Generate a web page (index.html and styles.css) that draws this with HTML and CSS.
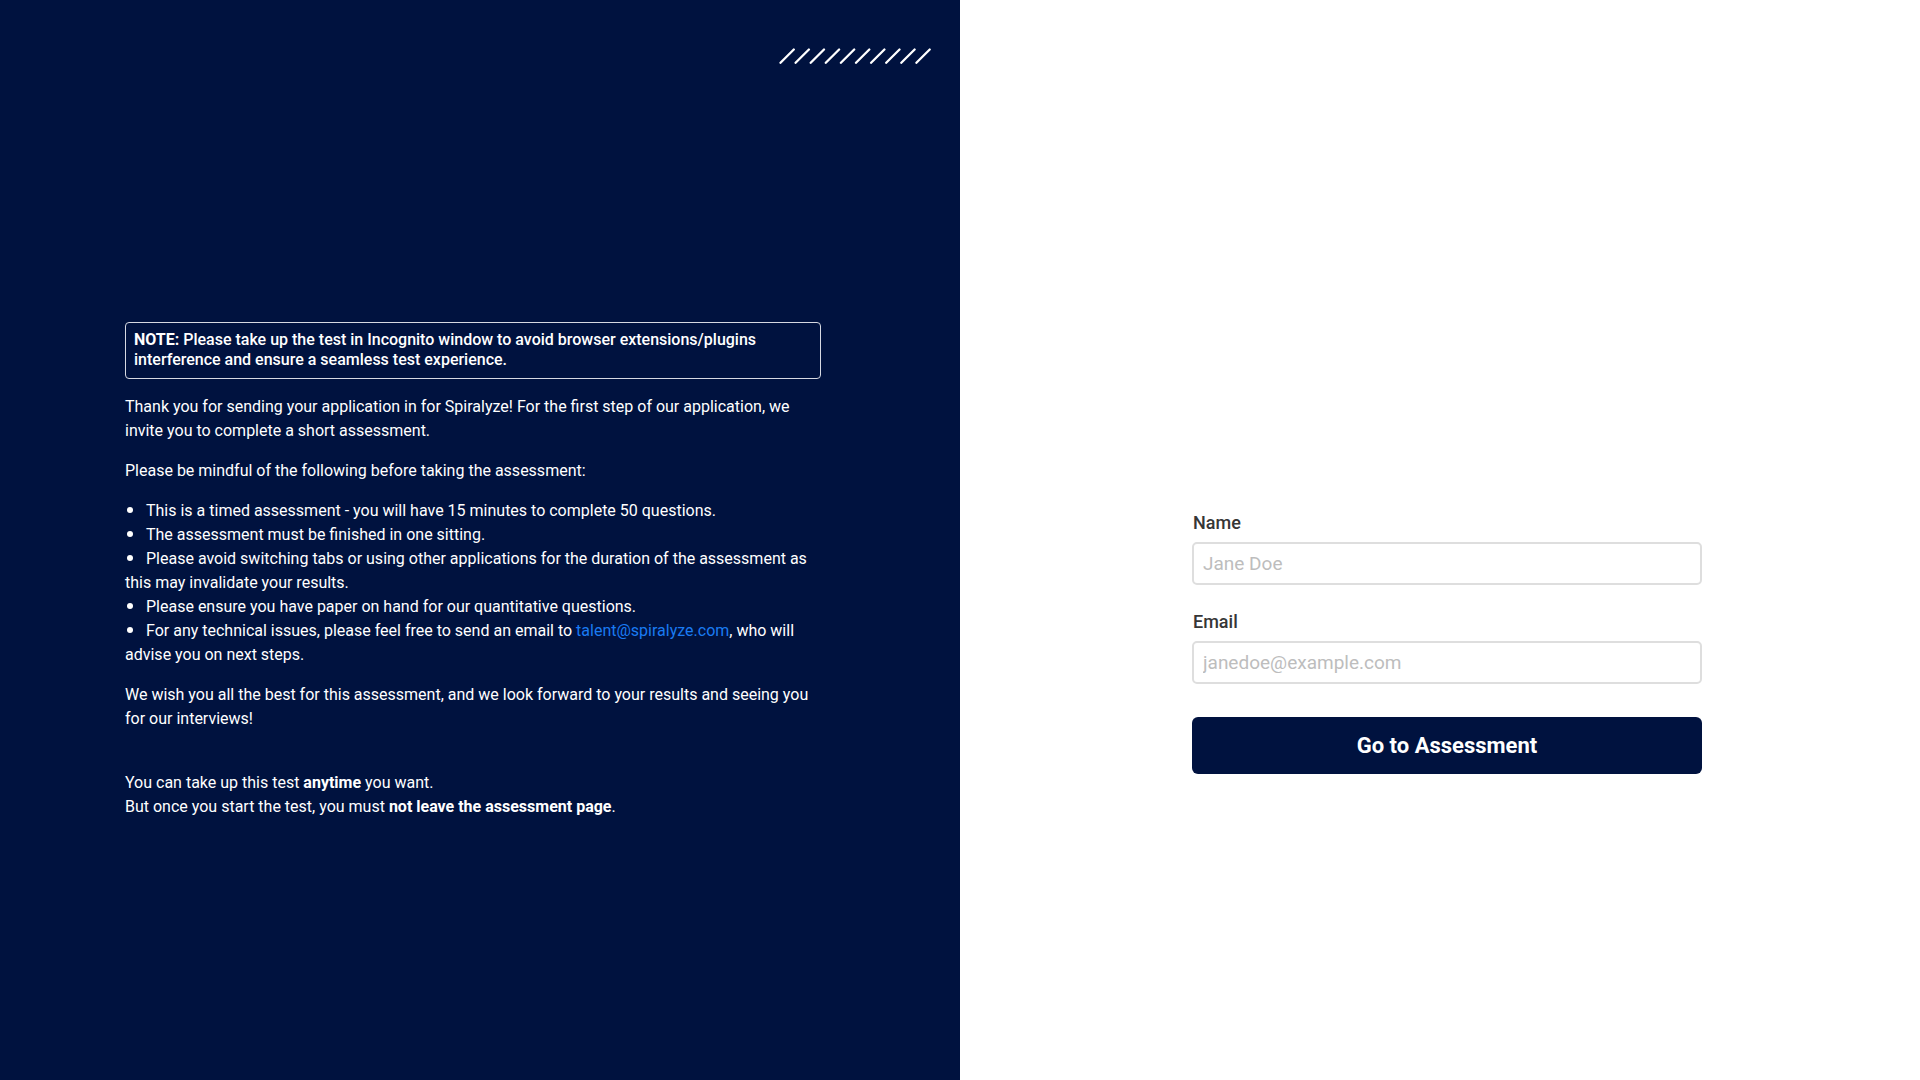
FILE: index.html
```html
<!DOCTYPE html>
<html lang="en">
<head>
<meta charset="utf-8">
<title>Spiralyze Assessment</title>
<link rel="stylesheet" href="styles.css">
</head>
<body>
<div class="page">
  <section class="left">
    <div class="brand-row">
      <svg class="slashes" width="152" height="16" viewBox="0 0 152 16" aria-hidden="true">
        <g stroke="#ffffff" stroke-width="2.3" stroke-linecap="round">
          <line x1="1.5" y1="14.8" x2="14.8" y2="1.5"/>
          <line x1="16.6" y1="14.8" x2="29.9" y2="1.5"/>
          <line x1="31.7" y1="14.8" x2="45" y2="1.5"/>
          <line x1="46.8" y1="14.8" x2="60.1" y2="1.5"/>
          <line x1="61.9" y1="14.8" x2="75.2" y2="1.5"/>
          <line x1="77" y1="14.8" x2="90.3" y2="1.5"/>
          <line x1="92.1" y1="14.8" x2="105.4" y2="1.5"/>
          <line x1="107.2" y1="14.8" x2="120.5" y2="1.5"/>
          <line x1="122.3" y1="14.8" x2="135.6" y2="1.5"/>
          <line x1="137.4" y1="14.8" x2="150.7" y2="1.5"/>
        </g>
      </svg>
    </div>
    <div class="content">
      <div class="note"><strong>NOTE:</strong> Please take up the test in Incognito window to avoid browser extensions/plugins interference and ensure a seamless test experience.</div>
      <p>Thank you for sending your application in for Spiralyze! For the first step of our application, we invite you to complete a short assessment.</p>
      <p>Please be mindful of the following before taking the assessment:</p>
      <ul class="rules">
        <li>This is a timed assessment - you will have 15 minutes to complete 50 questions.</li>
        <li>The assessment must be finished in one sitting.</li>
        <li>Please avoid switching tabs or using other applications for the duration of the assessment as this may invalidate your results.</li>
        <li>Please ensure you have paper on hand for our quantitative questions.</li>
        <li>For any technical issues, please feel free to send an email to <a class="mail" href="#">talent@spiralyze.com</a>, who will advise you on next steps.</li>
      </ul>
      <p>We wish you all the best for this assessment, and we look forward to your results and seeing you for our interviews!</p>
      <p class="closing">You can take up this test <strong>anytime</strong> you want.<br>But once you start the test, you must <strong>not leave the assessment page</strong>.</p>
    </div>
  </section>
  <section class="right">
    <form class="form">
      <div class="field">
        <label class="label" for="name">Name</label>
        <input class="input" id="name" type="text" placeholder="Jane Doe">
      </div>
      <div class="field">
        <label class="label" for="email">Email</label>
        <input class="input" id="email" type="email" placeholder="janedoe@example.com">
      </div>
      <button class="btn" type="button">Go to Assessment</button>
    </form>
  </section>
</div>
</body>
</html>
```
FILE: styles.css
```css
* { box-sizing: border-box; }
html, body { margin: 0; padding: 0; }
body {
  font-family: Roboto, "Liberation Sans", Arial, sans-serif;
  background: #ffffff;
}
.page {
  display: flex;
  width: 1920px;
  height: 1080px;
}
.left {
  width: 960px;
  background: #00123f;
  color: #ffffff;
  padding-top: 48px;
}
.brand-row {
  display: flex;
  justify-content: flex-end;
  padding-right: 29px;
}
.slashes { display: block; }
.content {
  margin-top: 258px;
  margin-left: 125px;
  width: 696px;
  font-size: 16px;
  line-height: 24px;
}
.note {
  border: 1px solid #d6d9e2;
  border-radius: 4px;
  padding: 7px 8px 8px;
  font-size: 16px;
  line-height: 20px;
  font-weight: 500;
  margin-bottom: 16px;
}
.note strong { font-weight: 700; }
.content p { margin: 0 0 16px; }
.rules {
  list-style: none;
  margin: 0 0 16px;
  padding: 0;
}
.rules li::before {
  content: "";
  display: inline-block;
  width: 6px;
  height: 6px;
  border-radius: 50%;
  background: #ffffff;
  margin-left: 2px;
  margin-right: 13px;
  vertical-align: 3px;
}
.mail { color: #1a7bf2; text-decoration: none; }
.content p.closing { margin-top: 40px; }
.closing strong { font-weight: 700; }

.right {
  flex: 1;
  display: flex;
  justify-content: center;
  padding-top: 512px;
  padding-left: 14px;
}
.form { width: 510px; }
.field { margin-bottom: 26px; }
.label {
  display: block;
  font-size: 18px;
  line-height: 22px;
  font-weight: 500;
  color: #363636;
  margin-bottom: 8px;
  padding-left: 1px;
}
.input {
  display: block;
  width: 100%;
  height: 43px;
  border: 2px solid #dedede;
  border-radius: 5px;
  padding: 0 9px;
  font-family: Roboto, "Liberation Sans", Arial, sans-serif;
  font-size: 19px;
  color: #333;
  outline: none;
  background: #fff;
}
.input::placeholder { color: #bdbdbd; }
.btn {
  display: block;
  width: 100%;
  height: 57px;
  margin-top: 33px;
  background: #00123f;
  color: #ffffff;
  border: none;
  border-radius: 6px;
  font-family: Roboto, "Liberation Sans", Arial, sans-serif;
  font-size: 22px;
  font-weight: 700;
  cursor: pointer;
}
```
